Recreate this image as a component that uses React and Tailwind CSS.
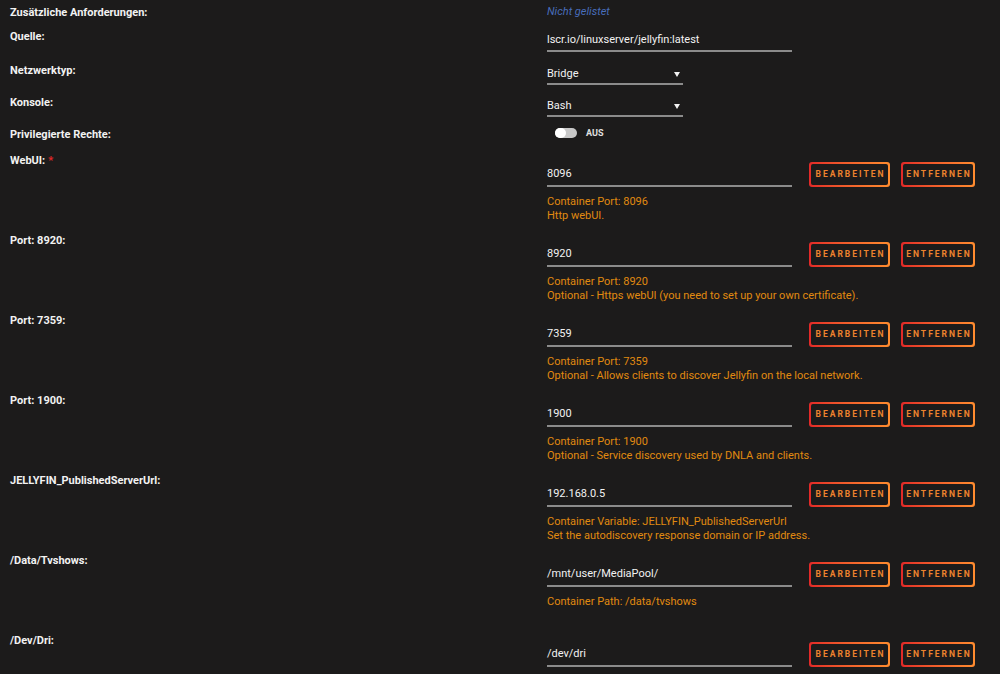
import React from 'react';

const Label = ({ children, required }) => (
  <div className="w-[547px] shrink-0 pl-[10px] pt-[5px] text-[11px] font-bold leading-[16px] text-[#f2f2f2]">
    {children}
    {required && <span className="ml-[3px] text-[#e22828]">*</span>}
  </div>
);

const GradientButton = ({ children, width }) => (
  <div className={`h-[25px] ${width} rounded-[3px] bg-linear-to-r from-[#e22828] to-[#ff8c2f] p-[2px]`}>
    <div className="flex h-full w-full items-center justify-center rounded-[2px] bg-[#1c1b1b] pl-[2px] text-[8.5px] font-bold tracking-[2px] text-[#ec832e]">
      {children}
    </div>
  </div>
);

const Select = ({ value }) => (
  <div className="flex h-[19px] w-[136px] items-start justify-between border-b-2 border-[#8b8b8b] pr-[3px] text-[11px] leading-[16px] text-[#f2f2f2]">
    <span>{value}</span>
    <svg width="6" height="6" viewBox="0 0 6 6" className="mt-[5px]">
      <polygon points="0,1 6,1 3,6" fill="#f2f2f2" />
    </svg>
  </div>
);

const ConfigRow = ({ label, required, value, lines }) => (
  <div className="flex h-[80px]">
    <Label required={required}>{label}</Label>
    <div className="flex flex-col pt-[14px]">
      <div className="flex items-start">
        <div className="h-[25px] w-[245px] border-b-2 border-[#8b8b8b] pt-[4px] text-[11px] leading-[16px] text-[#f2f2f2]">
          {value}
        </div>
        <div className="ml-[17px] flex gap-[11px]">
          <GradientButton width="w-[81px]">BEARBEITEN</GradientButton>
          <GradientButton width="w-[74px]">ENTFERNEN</GradientButton>
        </div>
      </div>
      <div className="mt-[8px] text-[11px] leading-[14px] text-[#e08a10]">
        {lines.map((line) => (
          <div key={line}>{line}</div>
        ))}
      </div>
    </div>
  </div>
);

const rows = [
  { label: 'WebUI:', required: true, value: '8096', lines: ['Container Port: 8096', 'Http webUI.'] },
  { label: 'Port: 8920:', value: '8920', lines: ['Container Port: 8920', 'Optional - Https webUI (you need to set up your own certificate).'] },
  { label: 'Port: 7359:', value: '7359', lines: ['Container Port: 7359', 'Optional - Allows clients to discover Jellyfin on the local network.'] },
  { label: 'Port: 1900:', value: '1900', lines: ['Container Port: 1900', 'Optional - Service discovery used by DNLA and clients.'] },
  { label: 'JELLYFIN_PublishedServerUrl:', value: '192.168.0.5', lines: ['Container Variable: JELLYFIN_PublishedServerUrl', 'Set the autodiscovery response domain or IP address.'] },
  { label: '/Data/Tvshows:', value: '/mnt/user/MediaPool/', lines: ['Container Path: /data/tvshows'] },
  { label: '/Dev/Dri:', value: '/dev/dri', lines: [] },
];

export default function App() {
  return (
    <div className="h-[674px] w-[1000px] overflow-hidden bg-[#1c1b1b] font-[Roboto,sans-serif]">
      {/* Zusätzliche Anforderungen */}
      <div className="flex h-[24px]">
        <Label>Zusätzliche Anforderungen:</Label>
        <div className="pt-[4px] text-[11px] italic leading-[16px] text-[#486dba]">Nicht gelistet</div>
      </div>

      {/* Quelle */}
      <div className="flex h-[34px]">
        <Label>Quelle:</Label>
        <div className="pt-[8px]">
          <div className="h-[20px] w-[245px] border-b-2 border-[#8b8b8b] text-[11px] leading-[16px] text-[#f2f2f2]">
            lscr.io/linuxserver/jellyfin:latest
          </div>
        </div>
      </div>

      {/* Netzwerktyp */}
      <div className="flex h-[32px]">
        <Label>Netzwerktyp:</Label>
        <div className="pt-[8px]">
          <Select value="Bridge" />
        </div>
      </div>

      {/* Konsole */}
      <div className="flex h-[32px]">
        <Label>Konsole:</Label>
        <div className="pt-[8px]">
          <Select value="Bash" />
        </div>
      </div>

      {/* Privilegierte Rechte */}
      <div className="flex h-[26px]">
        <Label>Privilegierte Rechte:</Label>
        <div className="flex items-start pl-[8px] pt-[6px]">
          <div className="flex h-[10px] w-[22px] items-center rounded-full bg-[#c8c8c8]">
            <div className="h-[10px] w-[11px] rounded-full bg-white" />
          </div>
          <span className="ml-[9px] text-[9px] font-bold leading-[10px] text-[#e0e0e0]">AUS</span>
        </div>
      </div>

      {rows.map((row) => (
        <ConfigRow key={row.label} {...row} />
      ))}
    </div>
  );
}
